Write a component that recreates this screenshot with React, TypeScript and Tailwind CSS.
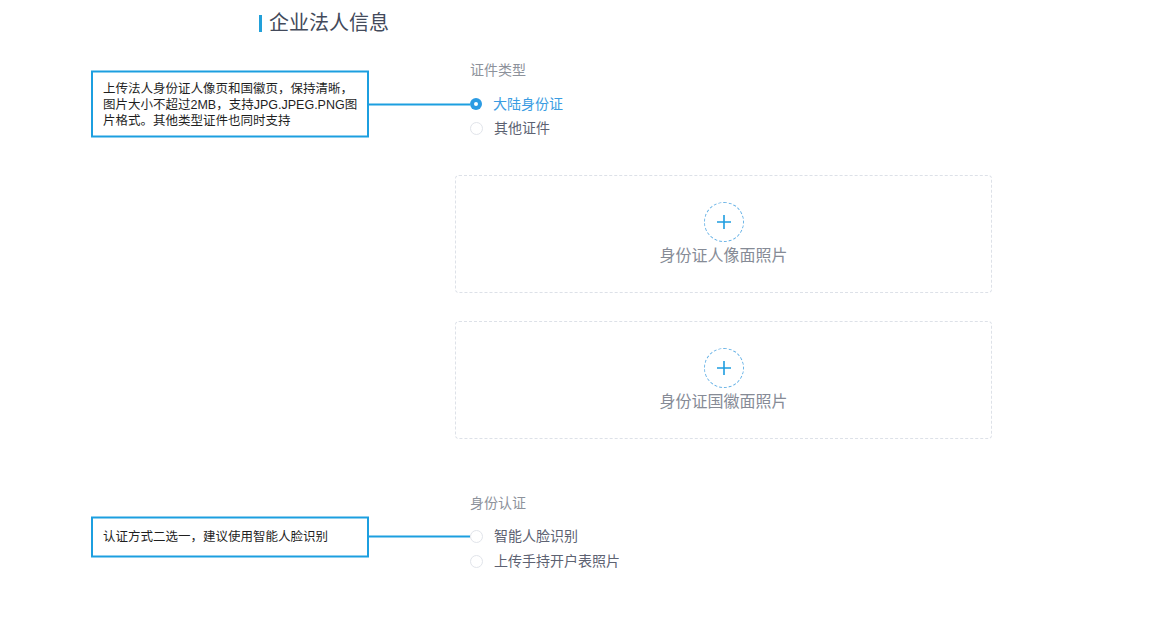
import React from 'react'

const font = { fontFamily: '"Liberation Sans", "Noto Sans CJK SC", sans-serif' }

function Callout({ children, className }: { children: React.ReactNode; className: string }) {
  return (
    <div className="absolute right-full top-1/2 -translate-y-1/2 flex items-center">
      <div
        className={`w-[278px] border-2 border-[#1c9fe0] bg-white pl-[10px] pr-[8px] text-[12.5px] leading-[16px] text-[#1f1f1f] ${className}`}
      >
        {children}
      </div>
      <div className="w-[101px] h-[2px] bg-[#1c9fe0]" />
    </div>
  )
}

function Radio({
  label,
  checked,
  height,
  callout,
}: {
  label: string
  checked?: boolean
  height: string
  callout?: React.ReactNode
}) {
  return (
    <div className={`flex items-center pl-[15px] ${height}`}>
      <div className="relative">
        {checked ? (
          <div className="w-[12px] h-[12px] rounded-full bg-[#2c9be3] flex items-center justify-center">
            <div className="w-[4px] h-[4px] rounded-full bg-white" />
          </div>
        ) : (
          <div className="w-[13px] h-[13px] rounded-full border border-[#e1e4ea] bg-white" />
        )}
        {callout}
      </div>
      <span className={`ml-[11px] text-[14px] ${checked ? 'text-[#3a9ce2]' : 'text-[#5d6272]'}`}>{label}</span>
    </div>
  )
}

function Upload({ label, className }: { label: string; className: string }) {
  return (
    <div
      className={`w-[537px] h-[118px] rounded-[4px] border border-dashed border-[#dde1e8] flex flex-col items-center pt-[26px] ${className}`}
    >
      <div className="w-[40px] h-[40px] rounded-full border border-dashed border-[#69b3e6] flex items-center justify-center">
        <svg width="16" height="16" viewBox="0 0 16 16">
          <path d="M8 1v14M1 8h14" stroke="#1f9de0" strokeWidth="1.6" />
        </svg>
      </div>
      <div className="mt-[2px] text-[16px] leading-[24px] text-[#868b96]">{label}</div>
    </div>
  )
}

export default function App() {
  return (
    <div className="w-[1160px] h-[638px] bg-white overflow-hidden" style={font}>
      <div className="pl-[259px] pt-[9px] h-[37px] flex items-center">
        <div className="w-[3px] h-[17px] bg-[#22a0d9]" />
        <h1 className="ml-[7px] text-[20px] leading-[28px] text-[#434a5b]">企业法人信息</h1>
      </div>

      <div className="pl-[455px]">
        <div className="mt-[23px] pl-[15px] text-[14px] leading-[20px] text-[#8d929b]">证件类型</div>
        <div className="mt-[12px]">
          <Radio
            label="大陆身份证"
            checked
            height="h-[24px]"
            callout={
              <Callout className="pt-[8px] pb-[7px]">
                上传法人身份证人像页和国徽页，保持清晰，图片大小不超过2MB，支持JPG.JPEG.PNG图片格式。其他类型证件也同时支持
              </Callout>
            }
          />
          <Radio label="其他证件" height="h-[24px]" />
        </div>

        <Upload label="身份证人像面照片" className="mt-[35px]" />
        <Upload label="身份证国徽面照片" className="mt-[28px]" />

        <div className="mt-[54px] pl-[15px] text-[14px] leading-[20px] text-[#8d929b]">身份认证</div>
        <div className="mt-[11px]">
          <Radio
            label="智能人脸识别"
            height="h-[25px]"
            callout={<Callout className="pt-[10px] pb-[11px]">认证方式二选一，建议使用智能人脸识别</Callout>}
          />
          <Radio label="上传手持开户表照片" height="h-[25px]" />
        </div>
      </div>
    </div>
  )
}
